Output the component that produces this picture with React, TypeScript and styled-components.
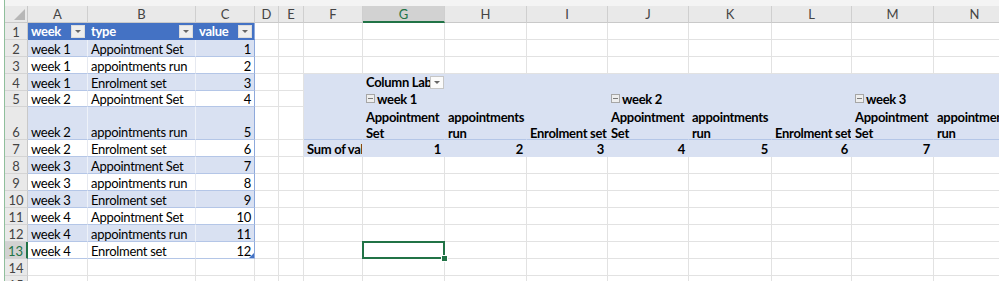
import React from 'react';
import styled, { createGlobalStyle } from 'styled-components';

const GlobalStyle = createGlobalStyle`
  body {
    margin: 0;
    background: #ffffff;
    font-family: Lato, 'Noto Sans', sans-serif;
  }
`;

const COLS = ['A', 'B', 'C', 'D', 'E', 'F', 'G', 'H', 'I', 'J', 'K', 'L', 'M', 'N'];
const WIDTHS = [60, 108, 59, 24, 25, 59, 82, 82, 81, 81, 83, 80, 82, 82];
const ROWS = Array.from({ length: 15 }, (_, i) => i + 1);
const ROW_H: Record<number, number> = { 5: 16, 6: 33 };

const TABLE: [string, string, number][] = [
  ['week 1', 'Appointment Set', 1],
  ['week 1', 'appointments run', 2],
  ['week 1', 'Enrolment set', 3],
  ['week 2', 'Appointment Set', 4],
  ['week 2', 'appointments run', 5],
  ['week 2', 'Enrolment set', 6],
  ['week 3', 'Appointment Set', 7],
  ['week 3', 'appointments run', 8],
  ['week 3', 'Enrolment set', 9],
  ['week 4', 'Appointment Set', 10],
  ['week 4', 'appointments run', 11],
  ['week 4', 'Enrolment set', 12],
];

type Tone = 'plain' | 'head' | 'band' | 'body' | 'pivot' | 'pivotRule';

const TONES: Record<Tone, { bg: string; right: string; bottom: string; color: string }> = {
  plain: { bg: '#ffffff', right: '#e2e2e2', bottom: '#e2e2e2', color: '#000000' },
  head: { bg: '#4472c4', right: '#4472c4', bottom: '#4472c4', color: '#ffffff' },
  band: { bg: '#d9e1f2', right: '#eef2f9', bottom: '#b4c6e7', color: '#000000' },
  body: { bg: '#ffffff', right: '#e6e9f0', bottom: '#b4c6e7', color: '#000000' },
  pivot: { bg: '#d9e1f2', right: '#d9e1f2', bottom: '#d9e1f2', color: '#000000' },
  pivotRule: { bg: '#d9e1f2', right: '#d9e1f2', bottom: '#b4c6e7', color: '#000000' },
};

const Sheet = styled.div`
  display: grid;
  grid-template-columns: 5px 23px ${WIDTHS.map((w) => `${w}px`).join(' ')};
  grid-template-rows: 6px 17px ${ROWS.map((r) => `${ROW_H[r] ?? 17}px`).join(' ')};
  width: 999px;
  height: 281px;
  overflow: hidden;
  font-size: 13px;
  letter-spacing: -0.3px;
  color: #000;
`;

const Strip = styled.div`
  grid-column: 1;
  grid-row: 1 / -1;
  background: #ffffff;
  border-right: 1px solid #8fbf9c;
`;

const TopBar = styled.div`
  grid-column: 2 / -1;
  grid-row: 1;
  background: #f4f4f4;
`;

const Corner = styled.div`
  box-sizing: border-box;
  background: #e9e9e9;
  border-right: 1px solid #c9c9c9;
  border-bottom: 1px solid #c9c9c9;
  display: flex;
  align-items: flex-end;
  justify-content: flex-end;
  padding: 0 2px 2px 0;
`;

const SelectAll = styled.span`
  width: 0;
  height: 0;
  border-left: 11px solid transparent;
  border-bottom: 11px solid #b7b7b7;
`;

const ColHead = styled.div<{ $active?: boolean }>`
  box-sizing: border-box;
  display: flex;
  align-items: center;
  justify-content: center;
  letter-spacing: 0;
  color: ${(p) => (p.$active ? '#217346' : '#444444')};
  background: ${(p) => (p.$active ? '#d2d2d2' : '#e9e9e9')};
  border-right: 1px solid #cfcfcf;
  border-bottom: ${(p) => (p.$active ? '2px solid #217346' : '1px solid #c9c9c9')};
`;

const RowHead = styled.div<{ $active?: boolean }>`
  box-sizing: border-box;
  display: flex;
  align-items: flex-end;
  justify-content: center;
  line-height: 13px;
  letter-spacing: 0;
  color: ${(p) => (p.$active ? '#217346' : '#444444')};
  background: ${(p) => (p.$active ? '#d2d2d2' : '#e9e9e9')};
  border-bottom: 1px solid #d4d4d4;
  border-right: ${(p) => (p.$active ? '2px solid #217346' : '1px solid #c9c9c9')};
`;

const Cell = styled.div<{
  $tone: Tone;
  $right?: boolean;
  $bold?: boolean;
  $edge?: boolean;
  $selected?: boolean;
  $handle?: boolean;
}>`
  box-sizing: border-box;
  position: relative;
  display: flex;
  align-items: flex-end;
  justify-content: ${(p) => (p.$right ? 'flex-end' : 'flex-start')};
  padding: 0 3px 0;
  min-width: 0;
  line-height: 13px;
  white-space: nowrap;
  overflow: ${(p) => (p.$selected ? 'visible' : 'hidden')};
  z-index: ${(p) => (p.$selected ? 2 : 'auto')};
  font-weight: ${(p) => (p.$bold ? 700 : 400)};
  color: ${(p) => TONES[p.$tone].color};
  background: ${(p) => TONES[p.$tone].bg};
  border-right: 1px solid ${(p) => (p.$edge ? '#8ea9db' : TONES[p.$tone].right)};
  border-bottom: 1px solid ${(p) => TONES[p.$tone].bottom};

  ${(p) =>
    p.$selected &&
    `
    &::after {
      content: '';
      position: absolute;
      left: -1px;
      top: -1px;
      right: -1px;
      bottom: -1px;
      border: 2px solid #217346;
    }
    &::before {
      content: '';
      position: absolute;
      right: -4px;
      bottom: -4px;
      width: 5px;
      height: 5px;
      background: #217346;
      border: 1px solid #ffffff;
      z-index: 3;
    }
  `}

  ${(p) =>
    p.$handle &&
    `
    &::after {
      content: '';
      position: absolute;
      right: 0;
      bottom: 0;
      width: 0;
      height: 0;
      border-left: 5px solid transparent;
      border-bottom: 5px solid #4472c4;
    }
  `}
`;

const HeadCell = styled(Cell)`
  align-items: center;
  padding: 1px 2px 0 3px;
  line-height: 15px;
`;

const LabelCell = styled(Cell)`
  align-items: center;
  padding: 1px 0 0 3px;
  line-height: 15px;
`;

const ToggleCell = styled(Cell)`
  padding-left: 2px;
`;

const FilterBtn = styled.span<{ $light?: boolean }>`
  flex: none;
  margin-left: auto;
  box-sizing: border-box;
  width: 14px;
  height: 13px;
  display: flex;
  align-items: center;
  justify-content: center;
  background: ${(p) => (p.$light ? '#fbfbfb' : '#eeeeee')};
  border: 1px solid ${(p) => (p.$light ? '#c6c6c6' : '#dcdcdc')};

  &::after {
    content: '';
    border-left: 3px solid transparent;
    border-right: 3px solid transparent;
    border-top: 3px solid #666666;
  }
`;

const Clip = styled.span`
  flex: 1;
  min-width: 0;
  overflow: hidden;
`;

const Toggle = styled.span`
  flex: none;
  box-sizing: border-box;
  width: 9px;
  height: 9px;
  margin: 0 2px 3px 1px;
  border: 1px solid #a6a6a6;
  background: #eeeeee;
  display: flex;
  align-items: center;
  justify-content: center;

  &::after {
    content: '';
    width: 5px;
    height: 1px;
    background: #7a7a7a;
  }
`;

const Lines = styled.span`
  display: flex;
  flex-direction: column;
  line-height: 16px;
  margin-bottom: -2px;
`;

const PIVOT_HEADS: [string, string | null][] = [
  ['Appointment', 'Set'],
  ['appointments', 'run'],
  ['Enrolment set', null],
];

function renderCell(r: number, c: string) {
  const ci = COLS.indexOf(c);
  const key = `${c}${r}`;

  if (r === 1 && ci <= 2) {
    return (
      <HeadCell key={key} $tone="head" $bold $edge={ci === 2}>
        <Clip>{['week', 'type', 'value'][ci]}</Clip>
        <FilterBtn />
      </HeadCell>
    );
  }

  if (r >= 2 && r <= 13 && ci <= 2) {
    const value = TABLE[r - 2][ci];
    return (
      <Cell
        key={key}
        $tone={r % 2 === 0 ? 'band' : 'body'}
        $right={ci === 2}
        $edge={ci === 2}
        $handle={r === 13 && ci === 2}
      >
        {value}
      </Cell>
    );
  }

  if (r >= 4 && r <= 7 && ci >= 5) {
    const tone: Tone = r === 6 ? 'pivotRule' : 'pivot';
    if (r === 4 && c === 'G') {
      return (
        <LabelCell key={key} $tone={tone} $bold>
          <Clip>Column Labels</Clip>
          <FilterBtn $light />
        </LabelCell>
      );
    }
    if (r === 5 && (c === 'G' || c === 'J' || c === 'M')) {
      const week = { G: 1, J: 2, M: 3 }[c];
      return (
        <ToggleCell key={key} $tone={tone} $bold>
          <Toggle />
          week {week}
        </ToggleCell>
      );
    }
    if (r === 6 && ci >= 6) {
      const [top, bottom] = PIVOT_HEADS[(ci - 6) % 3];
      return (
        <Cell key={key} $tone={tone} $bold>
          <Lines>
            <span>{top}</span>
            {bottom && <span>{bottom}</span>}
          </Lines>
        </Cell>
      );
    }
    if (r === 7) {
      return (
        <Cell key={key} $tone={tone} $bold $right={ci >= 6}>
          {ci === 5 ? 'Sum of value' : ci - 5}
        </Cell>
      );
    }
    return <Cell key={key} $tone={tone} />;
  }

  return <Cell key={key} $tone="plain" $selected={r === 13 && c === 'G'} />;
}

const App: React.FC = () => {
  return (
    <>
      <GlobalStyle />
      <Sheet>
        <Strip />
        <TopBar />
        <Corner>
          <SelectAll />
        </Corner>
        {COLS.map((c) => (
          <ColHead key={c} $active={c === 'G'}>
            {c}
          </ColHead>
        ))}
        {ROWS.map((r) => (
          <React.Fragment key={r}>
            <RowHead $active={r === 13}>{r}</RowHead>
            {COLS.map((c) => renderCell(r, c))}
          </React.Fragment>
        ))}
      </Sheet>
    </>
  );
};

export default App;
